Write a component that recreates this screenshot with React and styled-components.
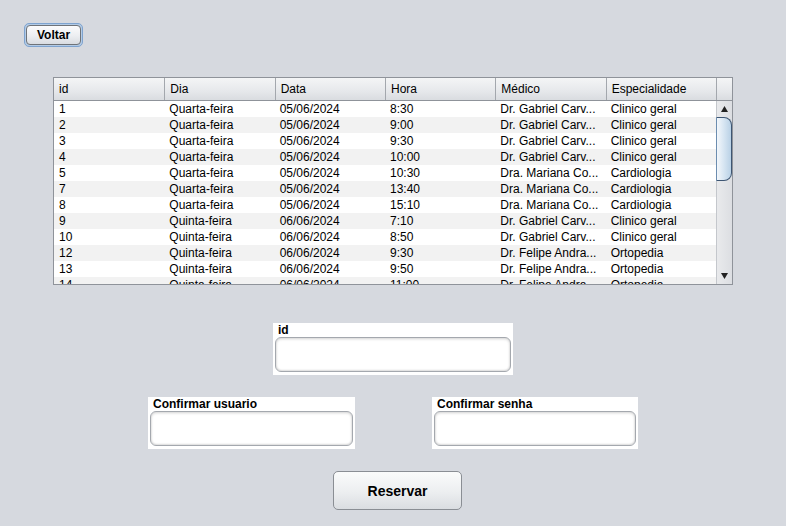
import React from "react";
import styled, { createGlobalStyle } from "styled-components";

const Global = createGlobalStyle`
  html, body { margin: 0; padding: 0; }
  body { background: #d6d9df; font-family: "Liberation Sans", Arial, sans-serif; }
`;

const Frame = styled.div`
  width: 786px;
  height: 526px;
  background: #d6d9df;
  box-sizing: border-box;
  padding-top: 23px;
  display: flex;
  flex-direction: column;
  align-items: flex-start;
  overflow: hidden;
`;

const BackButton = styled.button`
  margin: 0 0 0 24px;
  width: 59px;
  height: 24px;
  flex: none;
  box-sizing: border-box;
  border: 1px solid #7ea3cf;
  border-radius: 5px;
  padding: 1px;
  background: #b3cbe6;
  font: bold 12px "Liberation Sans", Arial, sans-serif;
  color: #000;
  cursor: pointer;
  display: flex;
  & > span {
    flex: 1;
    display: flex;
    align-items: center;
    justify-content: center;
    border: 1px solid #6f7378;
    border-radius: 4px;
    background: linear-gradient(#fbfbfc, #eceef1 55%, #d9dce1);
    box-sizing: border-box;
  }
`;

const TableBox = styled.div`
  margin-top: 30px;
  margin-left: 53px;
  width: 680px;
  height: 208px;
  flex: none;
  box-sizing: border-box;
  border: 1px solid #8f939a;
  background: #fff;
  display: flex;
  flex-direction: column;
  overflow: hidden;
`;

const HeaderRow = styled.div`
  display: grid;
  grid-template-columns: repeat(6, 1fr) 16px;
  height: 22px;
  border-bottom: 1px solid #8f939a;
  background: linear-gradient(#f4f5f6, #e6e8eb 60%, #d9dce0);
  flex: none;
`;

const HeaderCell = styled.div`
  font: 12px "Liberation Sans", Arial, sans-serif;
  color: #000;
  display: flex;
  align-items: center;
  padding-left: 5px;
  border-left: ${(p) => (p.$first ? "none" : "1px solid #a3a7ad")};
  box-sizing: border-box;
`;

const BodyArea = styled.div`
  display: flex;
  flex: 1;
  min-height: 0;
`;

const Rows = styled.div`
  flex: 1;
  overflow: hidden;
`;

const Row = styled.div`
  display: grid;
  grid-template-columns: repeat(6, 1fr);
  height: 16px;
  background: ${(p) => (p.$alt ? "#f2f2f2" : "#ffffff")};
`;

const Cell = styled.div`
  font: 12px "Liberation Sans", Arial, sans-serif;
  color: #000;
  line-height: 16px;
  padding-left: 5px;
  white-space: nowrap;
  overflow: hidden;
`;

const ScrollBar = styled.div`
  width: 16px;
  display: flex;
  flex-direction: column;
  background: linear-gradient(90deg, #e9eaec, #dcdee2);
  border-left: 1px solid #c4c7cc;
  box-sizing: border-box;
`;

const Arrow = styled.div`
  height: 16px;
  flex: none;
  display: flex;
  align-items: center;
  justify-content: center;
`;

const Thumb = styled.div`
  height: 64px;
  margin-left: -1px;
  flex: none;
  box-sizing: border-box;
  border: 1px solid #3e5673;
  border-left-color: #6c8db0;
  border-radius: 0 8px 8px 0;
  background: linear-gradient(90deg, #f3f7fb, #d6e5f2 50%, #b9d1e6);
`;

const Track = styled.div`
  flex: 1;
`;

const Field = styled.div`
  background: #fff;
  width: ${(p) => p.$w}px;
  height: 52px;
  box-sizing: border-box;
  padding: 2px 2px 3px 2px;
  display: flex;
  flex-direction: column;
`;

const Label = styled.div`
  font: bold 12px "Liberation Sans", Arial, sans-serif;
  color: #000;
  height: 12px;
  line-height: 11px;
  padding-left: 3px;
`;

const Input = styled.input`
  margin: 0;
  flex: 1;
  box-sizing: border-box;
  border: 1px solid #a4a8ae;
  border-radius: 6px;
  background: #fff;
  box-shadow: inset 0 1px 3px rgba(0, 0, 0, 0.18), inset 0 -1px 2px rgba(0, 0, 0, 0.12);
  outline: none;
  font: 12px "Liberation Sans", Arial, sans-serif;
  padding: 0 6px;
`;

const Center = styled.div`
  align-self: stretch;
  display: flex;
  justify-content: center;
  margin-top: ${(p) => p.$mt}px;
  gap: ${(p) => p.$gap || 0}px;
`;

const ReserveButton = styled.button`
  margin: 22px 0 0 333px;
  width: 129px;
  height: 39px;
  flex: none;
  box-sizing: border-box;
  border: 1px solid #8a8e94;
  border-radius: 5px;
  background: linear-gradient(#fafbfb, #eceef0 55%, #dadde1);
  font: bold 14px "Liberation Sans", Arial, sans-serif;
  color: #000;
  cursor: pointer;
`;

const GABRIEL = "Dr. Gabriel Carv...";
const MARIANA = "Dra. Mariana Co...";
const FELIPE = "Dr. Felipe Andra...";

const data = [
  ["1", "Quarta-feira", "05/06/2024", "8:30", GABRIEL, "Clinico geral"],
  ["2", "Quarta-feira", "05/06/2024", "9:00", GABRIEL, "Clinico geral"],
  ["3", "Quarta-feira", "05/06/2024", "9:30", GABRIEL, "Clinico geral"],
  ["4", "Quarta-feira", "05/06/2024", "10:00", GABRIEL, "Clinico geral"],
  ["5", "Quarta-feira", "05/06/2024", "10:30", MARIANA, "Cardiologia"],
  ["7", "Quarta-feira", "05/06/2024", "13:40", MARIANA, "Cardiologia"],
  ["8", "Quarta-feira", "05/06/2024", "15:10", MARIANA, "Cardiologia"],
  ["9", "Quinta-feira", "06/06/2024", "7:10", GABRIEL, "Clinico geral"],
  ["10", "Quinta-feira", "06/06/2024", "8:50", GABRIEL, "Clinico geral"],
  ["12", "Quinta-feira", "06/06/2024", "9:30", FELIPE, "Ortopedia"],
  ["13", "Quinta-feira", "06/06/2024", "9:50", FELIPE, "Ortopedia"],
  ["14", "Quinta-feira", "06/06/2024", "11:00", FELIPE, "Ortopedia"],
];

const headers = ["id", "Dia", "Data", "Hora", "Médico", "Especialidade"];

const Tri = ({ down }) => (
  <svg width="7" height="6" viewBox="0 0 7 6">
    <path d={down ? "M0 0 L7 0 L3.5 6 Z" : "M0 6 L7 6 L3.5 0 Z"} fill="#222" />
  </svg>
);

export default function App() {
  return (
    <Frame>
      <Global />
      <BackButton>
        <span>Voltar</span>
      </BackButton>
      <TableBox>
        <HeaderRow>
          {headers.map((h, i) => (
            <HeaderCell key={h} $first={i === 0}>
              {h}
            </HeaderCell>
          ))}
          <HeaderCell />
        </HeaderRow>
        <BodyArea>
          <Rows>
            {data.map((r, i) => (
              <Row key={r[0]} $alt={i % 2 === 1}>
                {r.map((c, j) => (
                  <Cell key={j}>{c}</Cell>
                ))}
              </Row>
            ))}
          </Rows>
          <ScrollBar>
            <Arrow>
              <Tri />
            </Arrow>
            <Thumb />
            <Track />
            <Arrow>
              <Tri down />
            </Arrow>
          </ScrollBar>
        </BodyArea>
      </TableBox>
      <Center $mt={38}>
        <Field $w={240}>
          <Label>id</Label>
          <Input />
        </Field>
      </Center>
      <Center $mt={22} $gap={77}>
        <Field $w={207}>
          <Label>Confirmar usuario</Label>
          <Input />
        </Field>
        <Field $w={206}>
          <Label>Confirmar senha</Label>
          <Input />
        </Field>
      </Center>
      <ReserveButton>Reservar</ReserveButton>
    </Frame>
  );
}
